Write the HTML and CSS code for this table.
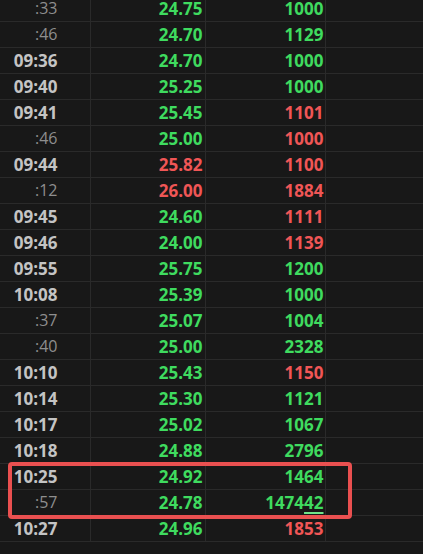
FILE: index.html
```html
<!DOCTYPE html>
<html lang="en">
<head>
    <meta charset="UTF-8">
    <meta name="viewport" content="width=device-width, initial-scale=1.0">
    <title>Time &amp; Sales</title>
    <link rel="stylesheet" href="styles.css">
</head>
<body>
    <div class="tape">
        <table class="ticks">
            <tbody>
                <tr><td class="time sec">:33</td><td class="up">24.75</td><td class="up">1000</td><td></td></tr>
                <tr><td class="time sec">:46</td><td class="up">24.70</td><td class="up">1129</td><td></td></tr>
                <tr><td class="time">09:36</td><td class="up">24.70</td><td class="up">1000</td><td></td></tr>
                <tr><td class="time">09:40</td><td class="up">25.25</td><td class="up">1000</td><td></td></tr>
                <tr><td class="time">09:41</td><td class="up">25.45</td><td class="down">1101</td><td></td></tr>
                <tr><td class="time sec">:46</td><td class="up">25.00</td><td class="down">1000</td><td></td></tr>
                <tr><td class="time">09:44</td><td class="down">25.82</td><td class="down">1100</td><td></td></tr>
                <tr><td class="time sec">:12</td><td class="down">26.00</td><td class="down">1884</td><td></td></tr>
                <tr><td class="time">09:45</td><td class="up">24.60</td><td class="down">1111</td><td></td></tr>
                <tr><td class="time">09:46</td><td class="up">24.00</td><td class="down">1139</td><td></td></tr>
                <tr><td class="time">09:55</td><td class="up">25.75</td><td class="up">1200</td><td></td></tr>
                <tr><td class="time">10:08</td><td class="up">25.39</td><td class="up">1000</td><td></td></tr>
                <tr><td class="time sec">:37</td><td class="up">25.07</td><td class="up">1004</td><td></td></tr>
                <tr><td class="time sec">:40</td><td class="up">25.00</td><td class="up">2328</td><td></td></tr>
                <tr><td class="time">10:10</td><td class="up">25.43</td><td class="down">1150</td><td></td></tr>
                <tr><td class="time">10:14</td><td class="up">25.30</td><td class="up">1121</td><td></td></tr>
                <tr><td class="time">10:17</td><td class="up">25.02</td><td class="up">1067</td><td></td></tr>
                <tr><td class="time">10:18</td><td class="up">24.88</td><td class="up">2796</td><td></td></tr>
                <tr><td class="time">10:25</td><td class="up">24.92</td><td class="up">1464</td><td></td></tr>
                <tr><td class="time sec">:57</td><td class="up">24.78</td><td class="up">1474<span class="mark">42</span></td><td></td></tr>
                <tr><td class="time">10:27</td><td class="up">24.96</td><td class="down">1853</td><td></td></tr>
            </tbody>
        </table>
        <div class="highlight"></div>
    </div>
</body>
</html>
```

FILE: styles.css
```css
body {
    margin: 0;
    background-color: #181818;
    font-family: "Open Sans", "Noto Sans", sans-serif;
    overflow: hidden;
}

.tape {
    position: relative;
    margin-top: -4px;
}

.ticks {
    border-collapse: collapse;
    width: 423px;
    table-layout: fixed;
}

.ticks td {
    height: 25px;
    padding: 0 2px 0 0;
    border-bottom: 1px solid #2a2a2a;
    text-align: right;
    font-size: 17px;
    font-weight: 700;
    line-height: 25px;
    white-space: nowrap;
}

.ticks td:nth-child(1) {
    width: 90px;
    padding-right: 32px;
    box-sizing: border-box;
    border-right: 1px solid #2a2a2a;
}

.ticks td:nth-child(2) {
    width: 115px;
    box-sizing: border-box;
    border-right: 1px solid #2a2a2a;
}

.ticks td:nth-child(3) {
    width: 120px;
    padding-right: 1px;
    box-sizing: border-box;
    border-right: 1px solid #2a2a2a;
}

.time {
    color: #c4c4c4;
}

.time.sec {
    color: #8e8e8e;
    font-weight: 400;
    font-size: 16px;
}

.up {
    color: #3fdb5f;
}

.down {
    color: #f05656;
}

.mark {
    text-decoration: underline;
    text-decoration-color: #6fe389;
    text-decoration-thickness: 2px;
    text-underline-offset: 3px;
}

.highlight {
    position: absolute;
    left: 8px;
    top: 466px;
    width: 336px;
    height: 49px;
    border: 4px solid #ea5050;
    border-radius: 4px;
}
```
